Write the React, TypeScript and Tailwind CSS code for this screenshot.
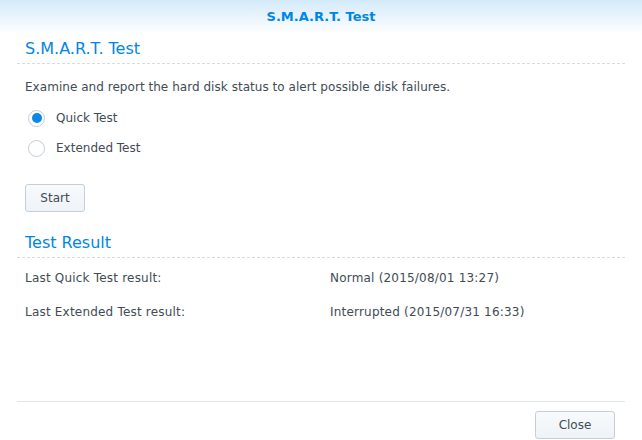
import { useState } from 'react'

const font = { fontFamily: '"DejaVu Sans", Verdana, sans-serif' }

function Radio({ checked, label, onClick }: { checked: boolean; label: string; onClick: () => void }) {
  return (
    <button type="button" onClick={onClick} className="flex h-[30px] items-center gap-[11px] pl-[3px] text-left">
      <span className="flex h-[17px] w-[17px] items-center justify-center rounded-full border border-[#c4ccd6] bg-white">
        {checked && <span className="h-[10px] w-[10px] rounded-full bg-[#0a87e8]" />}
      </span>
      <span>{label}</span>
    </button>
  )
}

function SectionTitle({ children }: { children: string }) {
  return (
    <div className="border-b border-dashed border-[#d3dde6] pb-[4px] pl-2 text-[16px] leading-[20px] text-[#0086e5]">
      {children}
    </div>
  )
}

export default function App() {
  const [mode, setMode] = useState<'quick' | 'extended'>('quick')

  return (
    <div style={font} className="flex h-[440px] w-[642px] flex-col bg-white text-[12px] text-[#414b55]">
      <div className="flex h-[34px] shrink-0 items-center justify-center bg-gradient-to-b from-[#d3eafa] to-white text-[13px] font-bold text-[#0086e5]">
        S.M.A.R.T. Test
      </div>

      <div className="flex flex-1 flex-col px-[17px] pt-[5px]">
        <SectionTitle>S.M.A.R.T. Test</SectionTitle>
        <p className="mt-[14px] pl-2 tracking-[0.04px]">Examine and report the hard disk status to alert possible disk failures.</p>
        <div className="mt-[7px] flex flex-col pl-2">
          <Radio checked={mode === 'quick'} label="Quick Test" onClick={() => setMode('quick')} />
          <Radio checked={mode === 'extended'} label="Extended Test" onClick={() => setMode('extended')} />
        </div>
        <div className="mt-[21px] pl-2">
          <button
            type="button"
            className="h-[28px] w-[60px] rounded-[3px] border border-[#c5cfd9] bg-gradient-to-b from-[#f8fafc] to-[#eef3f8] text-[12px] text-[#414b55]"
          >
            Start
          </button>
        </div>

        <div className="mt-[21px]">
          <SectionTitle>Test Result</SectionTitle>
        </div>
        <div className="mt-[11px] grid grid-cols-[305px_1fr] gap-y-[16px] pl-2 leading-[18px] tracking-[0.2px]">
          <span>Last Quick Test result:</span>
          <span>Normal (2015/08/01 13:27)</span>
          <span>Last Extended Test result:</span>
          <span>Interrupted (2015/07/31 16:33)</span>
        </div>
      </div>

      <div className="mx-[17px] flex h-[39px] shrink-0 items-start justify-end border-t border-[#e3e6e9] pt-[9px] pr-[10px]">
        <button
          type="button"
          className="h-[28px] w-[80px] rounded-[3px] border border-[#c5cfd9] bg-gradient-to-b from-[#f8fafc] to-[#eef3f8] text-[12px] text-[#414b55]"
        >
          Close
        </button>
      </div>
    </div>
  )
}
